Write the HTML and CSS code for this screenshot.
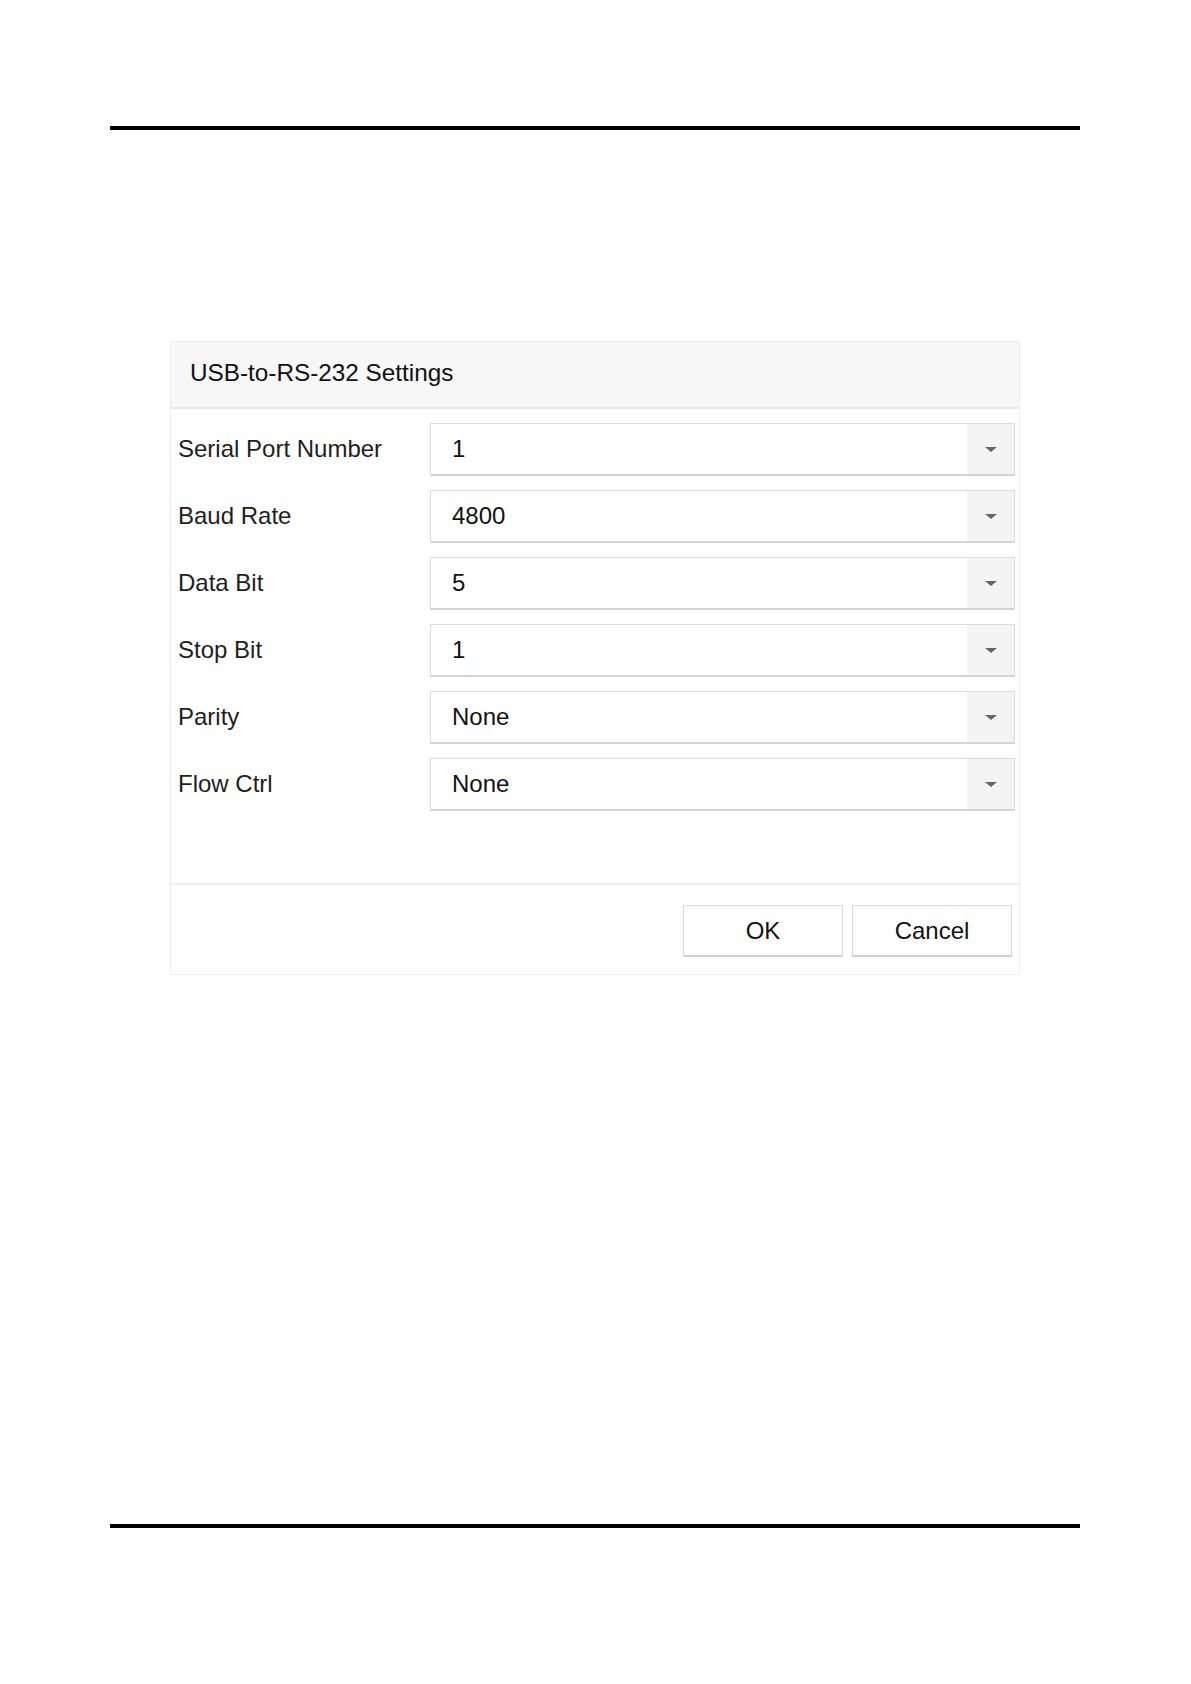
FILE: index.html
```html
<!DOCTYPE html>
<html>
<head>
<meta charset="utf-8">
<link rel="stylesheet" href="styles.css">
</head>
<body>
<div class="page">
  <div class="rule rule-top"></div>
  <div class="dialog">
    <div class="dlg-header">USB-to-RS-232 Settings</div>
    <div class="dlg-body">
      <div class="row"><div class="label">Serial Port Number</div><div class="select"><span class="value">1</span><span class="arrow"><i></i></span></div></div>
      <div class="row"><div class="label">Baud Rate</div><div class="select"><span class="value">4800</span><span class="arrow"><i></i></span></div></div>
      <div class="row"><div class="label">Data Bit</div><div class="select"><span class="value">5</span><span class="arrow"><i></i></span></div></div>
      <div class="row"><div class="label">Stop Bit</div><div class="select"><span class="value">1</span><span class="arrow"><i></i></span></div></div>
      <div class="row"><div class="label">Parity</div><div class="select"><span class="value">None</span><span class="arrow"><i></i></span></div></div>
      <div class="row"><div class="label">Flow Ctrl</div><div class="select"><span class="value">None</span><span class="arrow"><i></i></span></div></div>
    </div>
    <div class="dlg-footer">
      <button class="btn">OK</button>
      <button class="btn">Cancel</button>
    </div>
  </div>
  <div class="spacer"></div>
  <div class="rule rule-bottom"></div>
</div>
</body>
</html>
```

FILE: styles.css
```css
html, body {
  margin: 0;
  padding: 0;
  background: #fff;
}
.page {
  width: 1191px;
  height: 1684px;
  font-family: "Liberation Sans", Arial, sans-serif;
  color: #1a1a1a;
  padding-top: 126px;
  box-sizing: border-box;
}
.rule {
  height: 4px;
  background: #000;
  margin-left: 110px;
  width: 970px;
}
.dialog {
  margin-top: 211px;
  margin-left: 170px;
  width: 850px;
  height: 634px;
  box-sizing: border-box;
  border: 1px solid #ececec;
  display: flex;
  flex-direction: column;
  background: #fff;
}
.dlg-header {
  height: 65px;
  line-height: 61px;
  background: #f7f7f7;
  border-bottom: 2px solid #e9e9e9;
  padding-left: 19px;
  font-size: 24.3px;
  color: #111;
}
.dlg-body {
  padding: 14px 4px 0 7px;
  display: flex;
  flex-direction: column;
  gap: 14px;
  flex: 1;
}
.row {
  display: flex;
  align-items: center;
  height: 53px;
}
.label {
  width: 252px;
  font-size: 24px;
  color: #1e1e1e;
  padding-bottom: 1px;
}
.select {
  flex: 1;
  height: 53px;
  box-sizing: border-box;
  border: 1px solid #dcdcdc;
  border-bottom: 2px solid #d4d4d4;
  display: flex;
  align-items: stretch;
  background: #fff;
}
.value {
  flex: 1;
  padding-left: 21px;
  font-size: 24px;
  line-height: 50px;
  color: #111;
}
.arrow {
  width: 47px;
  background: #f4f4f4;
  display: flex;
  align-items: center;
  justify-content: center;
}
.arrow i {
  width: 0;
  height: 0;
  border-left: 6px solid transparent;
  border-right: 6px solid transparent;
  border-top: 5px solid #666;
}
.dlg-footer {
  border-top: 2px solid #f0f0f0;
  height: 91px;
  box-sizing: border-box;
  padding: 20px 7px 0 0;
  display: flex;
  justify-content: flex-end;
  gap: 9px;
}
.btn {
  width: 160px;
  height: 52px;
  box-sizing: border-box;
  border: 1px solid #dadada;
  border-bottom: 2px solid #d0d0d0;
  background: #fff;
  font-family: "Liberation Sans", Arial, sans-serif;
  font-size: 24px;
  color: #111;
  padding: 0;
}
.spacer {
  height: 549px;
}
```
